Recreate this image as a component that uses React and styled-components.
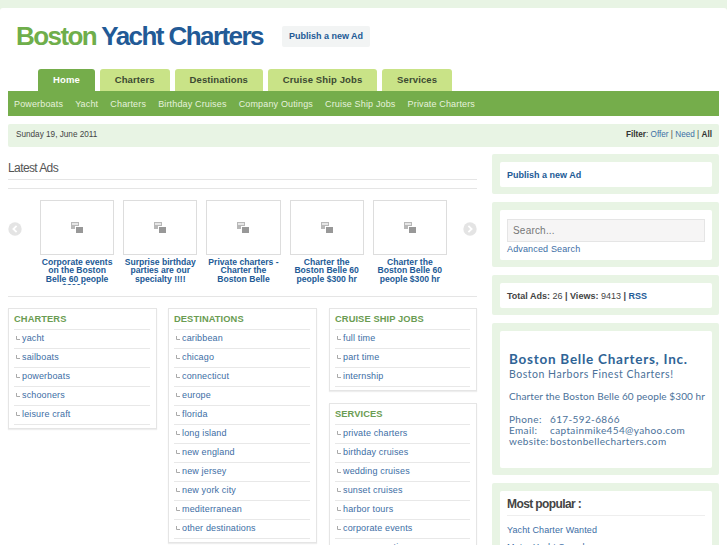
import styled, { createGlobalStyle } from "styled-components"

const GlobalStyle = createGlobalStyle`
    html, body {
        margin: 0;
        padding: 0;
        height: 545px;
        overflow: hidden;
        background: #fff;
    }
    * { box-sizing: border-box; }
    body {
        font-family: "Liberation Sans", Arial, sans-serif;
        font-size: 9px;
        color: #444;
    }
    a { color: #3d6ea5; text-decoration: none; }
`

const tabs = ["Home", "Charters", "Destinations", "Cruise Ship Jobs", "Services"]
const subLinks = ["Powerboats", "Yacht", "Charters", "Birthday Cruises", "Company Outings", "Cruise Ship Jobs", "Private Charters"]
const ads = [
    "Corporate events on the Boston Belle 60 people $300 hr",
    "Surprise birthday parties are our specialty !!!!",
    "Private charters - Charter the Boston Belle",
    "Charter the Boston Belle 60 people $300 hr",
    "Charter the Boston Belle 60 people $300 hr",
]
const charters = ["yacht", "sailboats", "powerboats", "schooners", "leisure craft"]
const destinations = ["caribbean", "chicago", "connecticut", "europe", "florida", "long island", "new england", "new jersey", "new york city", "mediterranean", "other destinations"]
const jobs = ["full time", "part time", "internship"]
const services = ["private charters", "birthday cruises", "wedding cruises", "sunset cruises", "harbor tours", "corporate events", "company outings"]

const Category = ({ title, items }) => (
    <CatBox>
        <CatTitle>{title}</CatTitle>
        {items.map((item) => (
            <CatRow key={item}>
                <Hook width="4" height="4" viewBox="0 0 4 4">
                    <path d="M0.5 0V3.5H4" fill="none" stroke="#aaa" strokeWidth="1" />
                </Hook>
                <a href="/">{item}</a>
            </CatRow>
        ))}
    </CatBox>
)

const App = () => {
    return (
        <>
            <GlobalStyle />
            <TopBand />
            <Page>
                <Header>
                    <Logo><span>Boston</span> Yacht Charters</Logo>
                    <PublishButton href="/">Publish a new Ad</PublishButton>
                </Header>

                <Tabs>
                    {tabs.map((tab, i) => (
                        <Tab key={tab} $active={i === 0}>{tab}</Tab>
                    ))}
                </Tabs>
                <SubNav>
                    {subLinks.map((link) => <a href="/" key={link}>{link}</a>)}
                </SubNav>

                <DateBar>
                    <span>Sunday 19, June 2011</span>
                    <Filter><b>Filter</b>: <a href="/">Offer</a> | <a href="/">Need</a> | <b>All</b></Filter>
                </DateBar>

                <Columns>
                    <Main>
                        <SectionTitle>Latest Ads</SectionTitle>
                        <Carousel>
                            <Arrow width="14" height="14" viewBox="0 0 14 14">
                                <circle cx="7" cy="7" r="6.7" fill="#e4e4e4" />
                                <path d="M8.6 3.8L5.4 7l3.2 3.2" fill="none" stroke="#fff" strokeWidth="1.8" />
                            </Arrow>
                            <Thumbs>
                                {ads.map((ad, i) => (
                                    <Ad key={i}>
                                        <Thumb>
                                            <svg width="12" height="11" viewBox="0 0 12 11">
                                                <rect x="0" y="0" width="8" height="7" fill="#b8b8b8" />
                                                <rect x="1" y="1" width="6" height="2" fill="#e6e6e6" />
                                                <rect x="4" y="4" width="8" height="7" fill="#fff" />
                                                <rect x="5" y="5" width="7" height="6" fill="#989898" />
                                            </svg>
                                        </Thumb>
                                        <Caption href="/">{ad}</Caption>
                                    </Ad>
                                ))}
                            </Thumbs>
                            <Arrow width="14" height="14" viewBox="0 0 14 14">
                                <circle cx="7" cy="7" r="6.7" fill="#e4e4e4" />
                                <path d="M5.4 3.8L8.6 7l-3.2 3.2" fill="none" stroke="#fff" strokeWidth="1.8" />
                            </Arrow>
                        </Carousel>

                        <Categories>
                            <CatColumn><Category title="CHARTERS" items={charters} /></CatColumn>
                            <CatColumn><Category title="DESTINATIONS" items={destinations} /></CatColumn>
                            <CatColumn>
                                <Category title="CRUISE SHIP JOBS" items={jobs} />
                                <Category title="SERVICES" items={services} />
                            </CatColumn>
                        </Categories>
                    </Main>

                    <Sidebar>
                        <Widget>
                            <Inner><StrongLink href="/">Publish a new Ad</StrongLink></Inner>
                        </Widget>
                        <Widget>
                            <SearchInner>
                                <SearchInput placeholder="Search..." readOnly />
                                <a href="/">Advanced Search</a>
                            </SearchInner>
                        </Widget>
                        <Widget>
                            <Inner>
                                <b>Total Ads:</b> 26 <b>| Views:</b> 9413 <b>|</b> <StrongLink href="/">RSS</StrongLink>
                            </Inner>
                        </Widget>
                        <Widget>
                            <Banner>
                                <BannerTitle>Boston Belle Charters, Inc.</BannerTitle>
                                <BannerLine>Boston Harbors Finest Charters!</BannerLine>
                                <BannerOffer>Charter the Boston Belle 60 people $300 hr</BannerOffer>
                                <Contact>
                                    <span>Phone:</span><span>617-592-6866</span>
                                    <span>Email:</span><span>captainmike454@yahoo.com</span>
                                    <span>website:</span><span>bostonbellecharters.com</span>
                                </Contact>
                            </Banner>
                        </Widget>
                        <Widget>
                            <PopularInner>
                                <PopularTitle>Most popular :</PopularTitle>
                                <a href="/">Yacht Charter Wanted</a>
                                <a href="/">Motor Yacht Search</a>
                            </PopularInner>
                        </Widget>
                    </Sidebar>
                </Columns>
            </Page>
        </>
    )
}

export default App

const TopBand = styled.div`
    height: 11px;
    margin-bottom: -3px;
    background: #e8f4e4;
`

const Page = styled.div`
    padding: 0 8px;
    background: #fff;
    border-radius: 3px 3px 0 0;
`

const Header = styled.div`
    display: flex;
    align-items: flex-start;
    height: 61px;
    padding: 12px 0 0 8px;
`

const Logo = styled.div`
    font-size: 26px;
    line-height: 32px;
    font-weight: bold;
    letter-spacing: -1.57px;
    color: #225a96;
    white-space: nowrap;
    width: 266px;

    span { color: #6fae4b; }
`

const PublishButton = styled.a`
    display: block;
    width: 88px;
    height: 21px;
    margin-top: 6px;
    line-height: 21px;
    text-align: center;
    background: #f2f4f4;
    border-radius: 2px;
    font-size: 9px;
    font-weight: bold;
    color: #225a96;
`

const Tabs = styled.div`
    display: flex;
    gap: 4.8px;
    height: 22px;
    padding-left: 30px;
`

const Tab = styled.div`
    height: 22px;
    padding: 0 15px;
    line-height: 22px;
    border-radius: 3px 3px 0 0;
    font-size: 9.5px;
    font-weight: bold;
    letter-spacing: 0.12px;
    background: ${(p) => (p.$active ? "#75ad4b" : "#c9e387")};
    color: ${(p) => (p.$active ? "#fff" : "#3c4a32")};
`

const SubNav = styled.div`
    display: flex;
    gap: 12.1px;
    height: 25px;
    align-items: center;
    padding-left: 6px;
    background: #75ad4b;

    a {
        color: #e6f2dc;
        font-size: 9px;
        letter-spacing: 0.15px;
    }
`

const DateBar = styled.div`
    display: flex;
    justify-content: space-between;
    align-items: center;
    height: 23px;
    margin-top: 8px;
    padding: 0 7px 3px 8px;
    background: #e8f4e4;
    border-radius: 2px;
    font-size: 8.2px;
`

const Filter = styled.div`
    b { color: #333; }
`

const Columns = styled.div`
    display: flex;
    justify-content: space-between;
    margin-top: 8px;
`

const Main = styled.div`
    width: 469px;
`

const SectionTitle = styled.h2`
    margin: 0;
    height: 25px;
    border-bottom: 1px solid #e5e5e5;
    font-size: 12px;
    font-weight: normal;
    letter-spacing: -0.6px;
    line-height: 26px;
    color: #555;
`

const Carousel = styled.div`
    display: flex;
    align-items: flex-start;
    height: 109px;
    margin-top: 8px;
    padding-top: 11px;
    border-top: 1px solid #e5e5e5;
    border-bottom: 1px solid #e5e5e5;
`

const Arrow = styled.svg`
    margin-top: 22px;
    flex: none;

    &:last-child { margin-left: auto; }
`

const Thumbs = styled.div`
    display: flex;
    gap: 9px;
    width: 407px;
    margin-left: 18px;
`

const Ad = styled.div`
    width: 74.2px;
    flex: none;
    display: flex;
    flex-direction: column;
    align-items: center;
`

const Thumb = styled.div`
    width: 100%;
    height: 55px;
    border: 1px solid #ddd;
    display: flex;
    align-items: center;
    justify-content: center;
`

const Caption = styled.a`
    display: block;
    height: 26.5px;
    margin-top: 3px;
    width: 72px;
    overflow: hidden;
    text-align: center;
    font-size: 8.6px;
    line-height: 8.4px;
    font-weight: bold;
    color: #225a96;
`

const Categories = styled.div`
    display: flex;
    gap: 11px;
    margin-top: 11px;
`

const CatColumn = styled.div`
    width: 149px;
    display: flex;
    flex-direction: column;
    gap: 12px;
    align-items: stretch;

    &:last-child {
        width: 148px;
        margin-left: 1px;
    }
`

const CatBox = styled.div`
    border: 1px solid #e5e5e5;
    box-shadow: 0 1px 1px #eee;
    padding: 0 6px 3px 5px;
`

const CatTitle = styled.h3`
    margin: 0;
    height: 21px;
    padding-bottom: 1px;
    line-height: 20px;
    font-size: 9.3px;
    font-weight: bold;
    letter-spacing: 0.1px;
    color: #6a9c52;
    border-bottom: 1px solid #e8e8e8;
`

const CatRow = styled.div`
    display: flex;
    align-items: center;
    height: 19px;
    gap: 2px;
    padding: 0 0 2px 2px;
    border-bottom: 1px solid #e8e8e8;
    font-size: 9px;
    letter-spacing: 0.15px;

    a { color: #3d6ea5; }
`

const Hook = styled.svg`
    flex: none;
    margin-top: -1px;
`

const Sidebar = styled.div`
    width: 227px;
    margin-top: -1px;
    display: flex;
    flex-direction: column;
    gap: 8px;
`

const Widget = styled.div`
    padding: 8px 7px 7px 8px;
    background: #e8f4e4;
    border-radius: 2px;
`

const Inner = styled.div`
    height: 25px;
    padding: 0 7px;
    line-height: 27px;
    background: #fff;
    border-radius: 2px;
    font-size: 9px;
`

const StrongLink = styled.a`
    font-weight: bold;
    color: #225a96;
`

const SearchInner = styled.div`
    height: 50px;
    padding: 9px 7px 0;
    background: #fff;
    border-radius: 2px;
    font-size: 9px;
    letter-spacing: 0.15px;

    a { display: block; margin-top: 2px; line-height: 11px; }
`

const SearchInput = styled.input`
    display: block;
    width: 198px;
    height: 23px;
    padding: 0 5px;
    border: 1px solid #e5e5e5;
    background: #f6f5f5;
    outline: none;
    font-family: "Liberation Sans", Arial, sans-serif;
    font-size: 10px;
    letter-spacing: 0.2px;

    &::placeholder { color: #777; opacity: 1; }
`

const Banner = styled.div`
    height: 137px;
    padding: 20px 0 0 9px;
    background: #fff;
    border-radius: 2px;
    font-family: "Lato", "Liberation Sans", sans-serif;
    color: #4a7199;
    white-space: nowrap;
`

const BannerTitle = styled.div`
    font-size: 13.5px;
    line-height: 16.5px;
    font-weight: bold;
    color: #2f6496;
    letter-spacing: 0.75px;
`

const BannerLine = styled.div`
    font-size: 10.5px;
    line-height: 13px;
    letter-spacing: 0.52px;
`

const BannerOffer = styled.div`
    margin-top: 9.7px;
    font-size: 10px;
    line-height: 13px;
    letter-spacing: 0.09px;
`

const Contact = styled.div`
    display: grid;
    grid-template-columns: 41px 1fr;
    margin-top: 11px;
    font-size: 10px;
    line-height: 11px;
    letter-spacing: 0.37px;
`

const PopularInner = styled.div`
    padding: 6px 7px 0;
    height: 80px;
    background: #fff;
    border-radius: 2px;
    font-size: 9px;
    letter-spacing: 0.1px;

    a { display: block; margin-bottom: 6px; line-height: 11px; }
`

const PopularTitle = styled.h3`
    margin: 0 0 9px;
    height: 19px;
    line-height: 14px;
    border-bottom: 1px solid #eee;
    font-size: 12px;
    letter-spacing: -0.6px;
    color: #444;
`
